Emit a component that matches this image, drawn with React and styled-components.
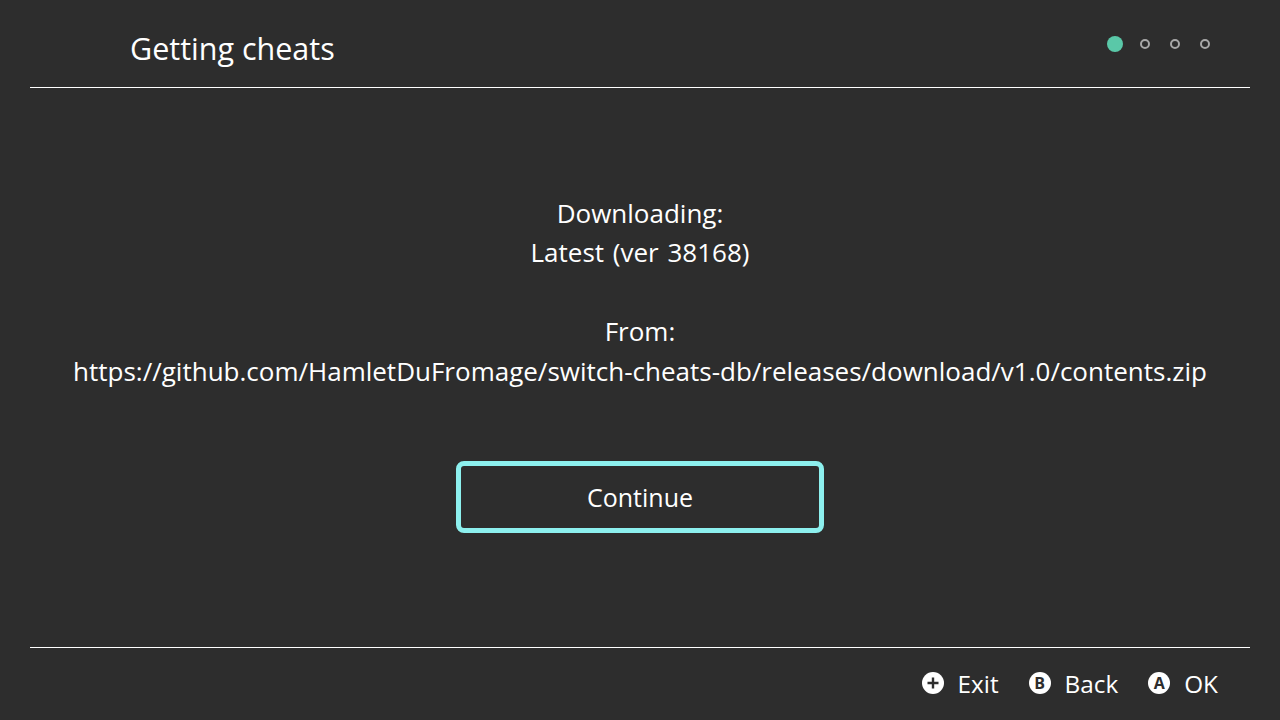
import React from 'react'
import styled, { createGlobalStyle } from 'styled-components'

const GlobalStyle = createGlobalStyle`
	html, body {
		margin: 0;
		padding: 0;
		background: #2d2d2d;
	}
	* {
		box-sizing: border-box;
	}
`

const Screen = styled.div`
	width: 1280px;
	height: 720px;
	display: flex;
	flex-direction: column;
	background: #2d2d2d;
	color: #fff;
	font-family: 'Open Sans', 'Noto Sans', sans-serif;
	overflow: hidden;
`

const Header = styled.header`
	height: 88px;
	margin: 0 30px;
	padding: 0 37px 0 100px;
	display: flex;
	justify-content: space-between;
	border-bottom: 1px solid #fff;
`

const Title = styled.h1`
	margin: 0;
	padding-top: 28px;
	font-size: 30.5px;
	line-height: 40px;
	font-weight: 400;
`

const Steps = styled.div`
	display: flex;
	align-items: flex-start;
	gap: 14px;
	padding-top: 36px;
`

const Step = styled.span`
	width: 16px;
	height: 16px;
	border-radius: 50%;
	background: ${(p) => (p.$active ? '#5ac8a8' : 'transparent')};
	border: ${(p) => (p.$active ? 'none' : '2.5px solid #a8a8a8')};
	${(p) => !p.$active && 'width: 10px; height: 10px; margin: 3px 3px;'}
`

const Main = styled.main`
	flex: 1;
	display: flex;
	flex-direction: column;
	align-items: center;
	padding-top: 106px;
`

const Message = styled.p`
	margin: 0;
	text-align: center;
	font-size: 26px;
	line-height: 39.4px;
	white-space: pre-line;
	word-spacing: 2px;
`

const ContinueButton = styled.button`
	width: 368px;
	height: 72px;
	margin-top: 70px;
	background: transparent;
	border: 5px solid #8df0ee;
	border-radius: 8px;
	color: #fff;
	font-family: inherit;
	font-size: 25px;
`

const Footer = styled.footer`
	height: 73px;
	margin: 0 30px;
	padding: 0 32px 2px 0;
	display: flex;
	justify-content: flex-end;
	align-items: center;
	gap: 30px;
	border-top: 1px solid #fff;
`

const Hint = styled.div`
	display: flex;
	align-items: center;
	gap: 14px;
	font-size: 24.3px;
`

const Badge = styled.span`
	width: 22px;
	height: 22px;
	border-radius: 50%;
	background: #fff;
	color: #2d2d2d;
	display: flex;
	align-items: center;
	justify-content: center;
	font-size: 16px;
	font-weight: 700;
	line-height: 1;
`

export default function App() {
	return (
		<Screen>
			<GlobalStyle />
			<Header>
				<Title>Getting cheats</Title>
				<Steps>
					<Step $active />
					<Step />
					<Step />
					<Step />
				</Steps>
			</Header>
			<Main>
				<Message>
					{'Downloading:\nLatest (ver 38168)\n\nFrom:\nhttps://github.com/HamletDuFromage/switch-cheats-db/releases/download/v1.0/contents.zip'}
				</Message>
				<ContinueButton>Continue</ContinueButton>
			</Main>
			<Footer>
				<Hint>
					<Badge>
						<svg width="14" height="14" viewBox="0 0 14 14">
							<path d="M7 1.5v11M1.5 7h11" stroke="#2d2d2d" strokeWidth="2.4" />
						</svg>
					</Badge>
					Exit
				</Hint>
				<Hint>
					<Badge>B</Badge>
					Back
				</Hint>
				<Hint>
					<Badge>A</Badge>
					OK
				</Hint>
			</Footer>
		</Screen>
	)
}
